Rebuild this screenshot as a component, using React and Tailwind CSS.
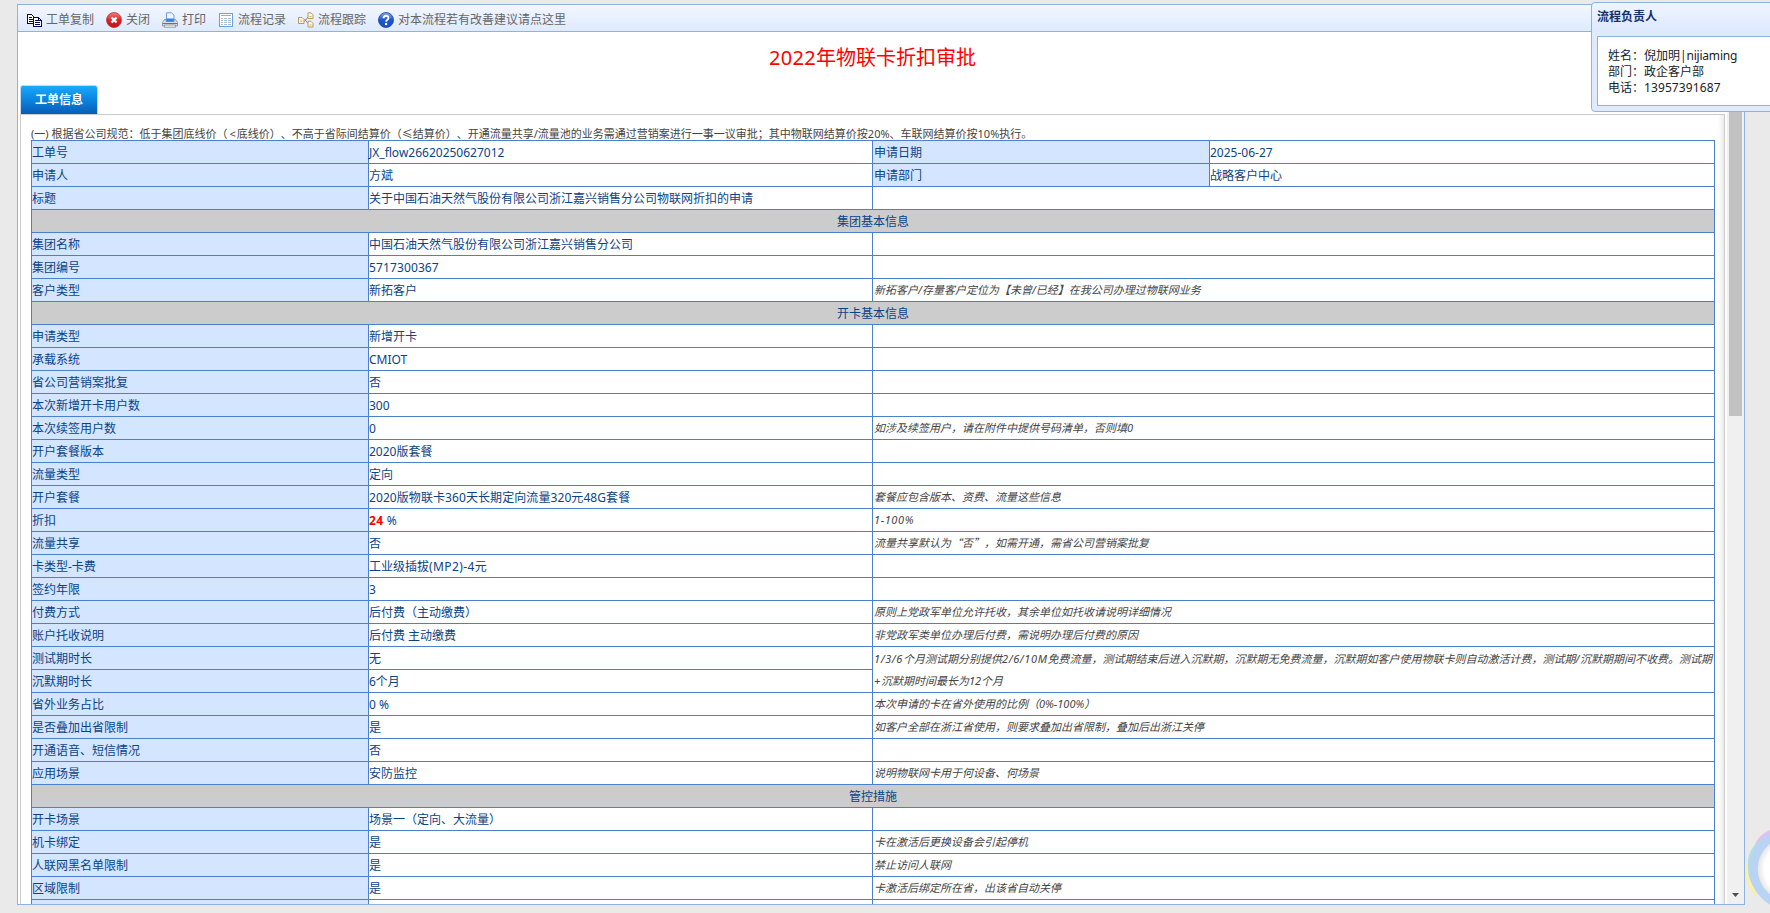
const FONT = "font-['Noto_Sans','Noto_Sans_CJK_SC',sans-serif] [text-spacing-trim:space-all]";

const CopyIcon = () => (
  <svg className="block shrink-0" width="16" height="16" viewBox="0 0 16 16" shapeRendering="crispEdges">
    <path d="M1.500 2.500h4l2 2v7h-6z" fill="#fff" stroke="#111" />
    <path d="M3 5.500h3M3 7.500h4M3 9.500h4" stroke="#111" />
    <path d="M7.500 5.500h5l3 3v6h-8z" fill="#fff" stroke="#07075e" />
    <path d="M12.500 5v4M12 8.500h4" stroke="#07075e" />
    <path d="M9 8.500h3M9 10.500h5M9 12.500h5" stroke="#07075e" />
  </svg>
);

const CloseIcon = () => (
  <svg className="block shrink-0" width="16" height="16" viewBox="0 0 16 16">
    <defs>
      <linearGradient id="red" x1="0" y1="0" x2="0" y2="1">
        <stop offset="0" stopColor="#ef8078" />
        <stop offset=".5" stopColor="#d8262a" />
        <stop offset="1" stopColor="#c80d16" />
      </linearGradient>
    </defs>
    <circle cx="8" cy="8" r="7.500" fill="url(#red)" stroke="#b3282c" strokeWidth=".7" />
    <path d="M5.500 5.500l5 5M10.500 5.500l-5 5" stroke="#fff" strokeWidth="2.400" />
  </svg>
);

const PrintIcon = () => (
  <svg className="block shrink-0" width="16" height="16" viewBox="0 0 16 16">
    <path d="M4.500 8V.8h5l2.500 2.400V8" fill="#eef5ff" stroke="#6f9be0" />
    <path d="M2.500 7.500h1.500v2h8v-2h1.500l2 3v3.500H.5v-3.500z" fill="#d9dce2" stroke="#8a8f99" strokeWidth=".9" />
    <path d="M4.200 6.500h7.600v3H4.200z" fill="#2f86e8" />
    <path d="M.8 11.500h14.400" stroke="#6d737e" />
    <path d="M2.500 13h11v2.300h-11z" fill="#eceef2" stroke="#8a8f99" strokeWidth=".8" />
  </svg>
);

const ListIcon = () => (
  <svg className="block shrink-0" width="16" height="16" viewBox="0 0 16 16" shapeRendering="crispEdges">
    <path d="M1.500 1.500h13v13h-13z" fill="#fff" stroke="#6f9fd8" />
    <path d="M3 3.500h10" stroke="#8cc08a" />
    <path d="M3 6.500h10M3 8.500h10M3 10.500h10M3 12.500h10" stroke="#a9bcd6" />
    <path d="M5.500 5v9M9.500 5v9" stroke="#fff" />
  </svg>
);

const TraceIcon = () => (
  <svg className="block shrink-0" width="16" height="16" viewBox="0 0 16 16">
    <path d="M6.500 9.500l3.500-4.500M6.500 7l3.500 4.500" stroke="#77736b" strokeWidth=".8" />
    <path d="M.5 5.500h3.500l2 2v4H.5zM10 .8h3l2 2v3.700h-5zM10 9.300h3l2 2V15h-5z" fill="#fdf8ea" stroke="#b59a5c" />
    <path d="M2 9h2.500M11.500 4.500h2M11.500 13h2" stroke="#b59a5c" strokeWidth=".8" />
  </svg>
);

const HelpIcon = () => (
  <svg className="block shrink-0" width="16" height="16" viewBox="0 0 16 16">
    <defs>
      <linearGradient id="blue" x1="0" y1="0" x2="0" y2="1">
        <stop offset="0" stopColor="#7ea6ee" />
        <stop offset=".5" stopColor="#1f55cf" />
        <stop offset="1" stopColor="#1450d0" />
      </linearGradient>
    </defs>
    <circle cx="8" cy="8" r="7.500" fill="url(#blue)" stroke="#1a4396" strokeWidth=".8" />
    <path d="M5.600 6.200c0-3.400 5-3.200 4.900-.3 0 1.800-2.300 1.700-2.400 3.700" fill="none" stroke="#fff" strokeWidth="1.900" />
    <circle cx="8.100" cy="12" r="1.200" fill="#fff" />
  </svg>
);

const ACTIONS = [
  [CopyIcon, "工单复制", "w-[80px]"],
  [CloseIcon, "关闭", "w-[56px]"],
  [PrintIcon, "打印", "w-[56px]"],
  [ListIcon, "流程记录", "w-[80px]"],
  [TraceIcon, "流程跟踪", "w-[80px]"],
  [HelpIcon, "对本流程若有改善建议请点这里", "w-[200px]"],
];

const Wide = ({ children }) => <span className="tracking-[0.6px]">{children}</span>;
const Quote = ({ children }) => <span className="font-['Noto_Sans_CJK_SC'] leading-[0]">{children}</span>;

const ROWS = [
  { label: "工单号", value: "JX_flow26620250627012", label2: "申请日期", value2: "2025-06-27" },
  { label: "申请人", value: "方斌", label2: "申请部门", value2: "战略客户中心" },
  { label: "标题", value: "关于中国石油天然气股份有限公司浙江嘉兴销售分公司物联网折扣的申请" },
  { section: "集团基本信息" },
  { label: "集团名称", value: "中国石油天然气股份有限公司浙江嘉兴销售分公司" },
  { label: "集团编号", value: <span className="tracking-[0.12px]">5717300367</span> },
  { label: "客户类型", value: "新拓客户", note: "新拓客户/存量客户定位为【未曾/已经】在我公司办理过物联网业务" },
  { section: "开卡基本信息" },
  { label: "申请类型", value: "新增开卡" },
  { label: "承载系统", value: "CMIOT" },
  { label: "省公司营销案批复", value: "否" },
  { label: "本次新增开卡用户数", value: "300" },
  { label: "本次续签用户数", value: "0", note: "如涉及续签用户，请在附件中提供号码清单，否则填0" },
  { label: "开户套餐版本", value: "2020版套餐" },
  { label: "流量类型", value: "定向" },
  {
    label: "开户套餐",
    value: <span className="tracking-[0.08px]">2020版物联卡360天长期定向流量320元48G套餐</span>,
    note: "套餐应包含版本、资费、流量这些信息",
  },
  {
    label: "折扣",
    value: (
      <>
        <b className="tracking-[0.4px] text-[#ff0000]">24</b> <Wide>%</Wide>
      </>
    ),
    note: <Wide>1-100%</Wide>,
  },
  {
    label: "流量共享",
    value: "否",
    note: (
      <>
        流量共享默认为<Quote>“</Quote>否<Quote>”，</Quote>如需开通，需省公司营销案批复
      </>
    ),
  },
  {
    label: "卡类型-卡费",
    value: (
      <>
        工业级插拔<span className="tracking-[0.4px]">(MP2)-4</span>元
      </>
    ),
  },
  { label: "签约年限", value: "3" },
  { label: "付费方式", value: "后付费（主动缴费）", note: "原则上党政军单位允许托收，其余单位如托收请说明详细情况" },
  { label: "账户托收说明", value: "后付费 主动缴费", note: "非党政军类单位办理后付费，需说明办理后付费的原因" },
  {
    label: "测试期时长",
    value: "无",
    span: 2,
    note: (
      <>
        <Wide>1/3/6</Wide>个月测试期分别提供<Wide>2/6/10M</Wide>
        免费流量，测试期结束后进入沉默期，沉默期无免费流量，沉默期如客户使用物联卡则自动激活计费，测试期<Wide>/</Wide>
        沉默期期间不收费。测试期
      </>
    ),
    note2: (
      <>
        <Wide>+</Wide>沉默期时间最长为12个月
      </>
    ),
  },
  { label: "沉默期时长", value: "6个月", covered: true },
  { label: "省外业务占比", value: "0 %", note: "本次申请的卡在省外使用的比例（0%-100%）" },
  { label: "是否叠加出省限制", value: "是", note: "如客户全部在浙江省使用，则要求叠加出省限制，叠加后出浙江关停" },
  { label: "开通语音、短信情况", value: "否" },
  { label: "应用场景", value: "安防监控", note: "说明物联网卡用于何设备、何场景" },
  { section: "管控措施" },
  { label: "开卡场景", value: "场景一（定向、大流量）" },
  { label: "机卡绑定", value: "是", note: "卡在激活后更换设备会引起停机" },
  { label: "人联网黑名单限制", value: "是", note: "禁止访问人联网" },
  { label: "区域限制", value: "是", note: "卡激活后绑定所在省，出该省自动关停" },
  { label: "", value: "" },
];

const BOX = "h-[23px] border border-[#4a80cc] p-0 whitespace-nowrap";
const CELL = BOX + " pt-[2px] leading-[20px]";
const LABEL = CELL + " bg-[#d4e5ff]";

function Row({ row }) {
  if (row.section) {
    return (
      <tr>
        <td colSpan={4} className={CELL + " bg-[#cccccc] text-center"}>{row.section}</td>
      </tr>
    );
  }
  return (
    <tr>
      <td className={LABEL}>{row.label}</td>
      <td className={CELL}>{row.value}</td>
      {row.label2 && (
        <>
          <td className={LABEL + " pl-px"}>{row.label2}</td>
          <td className={CELL}>{row.value2}</td>
        </>
      )}
      {!row.label2 && !row.covered && (
        <td
          colSpan={2}
          rowSpan={row.span || 1}
          className={BOX + " pl-px text-[11px] leading-[22px] text-[#444444] italic"}
        >
          <div className="h-[22px]">{row.note}</div>
          {row.note2 && <div className="h-[22px]">{row.note2}</div>}
        </td>
      )}
    </tr>
  );
}

export default function App() {
  return (
    <div className={"relative h-[913px] w-[1770px] overflow-hidden bg-[#eaeaea] pt-1 pl-[17px] text-[12px] " + FONT}>
      <div className="flex h-[901px] w-[1728px] flex-col border border-[#8db2e3] bg-white">
        <div className="flex h-[27px] shrink-0 items-center border-b border-[#8db2e3] bg-linear-to-b from-[#f2f6ff] to-[#dfeaff] pt-[4px] pl-[8px] text-[#666666]">
          {ACTIONS.map(([Icon, text, width]) => (
            <div key={text} className={"flex shrink-0 items-center gap-1 whitespace-nowrap " + width}>
              <Icon />
              <span>{text}</span>
            </div>
          ))}
        </div>

        <div className="flex min-h-0 flex-1">
          <div className="flex w-[1709px] shrink-0 flex-col overflow-hidden pl-[2px]">
            <h1 className="h-[53px] shrink-0 pt-[11px] pr-[2px] text-center text-[20px] leading-[30px] text-[#ff0000]">
              <span className="tracking-[0.35px]">2022</span>年物联卡折扣审批
            </h1>
            <div className="h-[29px] w-[78px] shrink-0 rounded-t-[3px] border border-b-0 border-[#c4d8ea] bg-linear-to-b from-[#1ba9fb] from-0% via-[#0a84de] via-50% to-[#0a5cb4] to-100% text-center leading-[27px] font-bold text-white">
              工单信息
            </div>
            <div className="min-h-0 w-[1705px] flex-1 overflow-hidden border border-b-0 border-[#cccccc] bg-linear-to-l from-[#ebebeb] to-white to-[6px] pt-[11px] pl-[10px]">
              <p className="h-[14px] text-[11px] leading-[16px] whitespace-nowrap text-[#444444]">
                (一) 根据省公司规范：低于集团底线价（<span className="pr-px pl-[2px]">&lt;</span>
                底线价）、不高于省际间结算价（≤结算价）、开通流量共享/流量池的业务需通过营销案进行一事一议审批；其中物联网结算价按20%、车联网结算价按10%执行。
              </p>
              <table className="w-[1684px] table-fixed border-collapse bg-white text-[#0b4387]">
                <colgroup>
                  <col className="w-[337px]" />
                  <col className="w-[504px]" />
                  <col className="w-[337px]" />
                  <col className="w-[505px]" />
                </colgroup>
                <tbody>
                  {ROWS.map((row, i) => (
                    <Row key={i} row={row} />
                  ))}
                </tbody>
              </table>
            </div>
          </div>
          <div className="flex w-[17px] shrink-0 flex-col items-center justify-between bg-[#f0f0f0] pt-[17px] pb-[7px]">
            <div className="h-[367px] w-[13px] bg-[#c1c1c1]" />
            <svg width="7" height="4" viewBox="0 0 7 4">
              <path d="M0 0h7L3.500 4z" fill="#505050" />
            </svg>
          </div>
        </div>
      </div>

      <aside className="absolute top-[2px] left-[1591px] h-[110px] w-[190px] rounded-[4px] border border-[#8db2e3] bg-linear-to-b from-[#eff5ff] to-[#dfeaff] to-[26px] pl-[5px]">
        <h2 className="h-[33px] pt-[2px] leading-[24px] font-bold text-[#15306b]">流程负责人</h2>
        <div className="h-[70px] w-[200px] border border-[#8db2e3] bg-white pt-[11px] pl-[10px] leading-[16px] text-[#222222]">
          <p>
            姓名：倪加明<span className="tracking-[-0.2px]">|nijiaming</span>
          </p>
          <p>部门：政企客户部</p>
          <p>
            电话：<span className="tracking-[0.1px]">13957391687</span>
          </p>
        </div>
      </aside>

      <svg className="absolute top-[826px] left-[1740px]" width="30" height="87" viewBox="0 0 30 87">
        <defs>
          <radialGradient id="disc" gradientUnits="userSpaceOnUse" cx="51" cy="43" r="33">
            <stop offset=".8" stopColor="#ffffff" />
            <stop offset="1" stopColor="#e6e6e6" />
          </radialGradient>
        </defs>
        <path d="M30 4C20 8 12 18 14 28L30 14z" fill="#dcc3ef" />
        <path d="M8 34C3 42 4 56 14 69L22 66z" fill="#f8efb0" />
        <path d="M24 12C11 20 7 28 8 43C8 55 16 66 26 73z" fill="#b4dde4" />
        <circle cx="50" cy="43" r="34" fill="url(#disc)" />
        <circle cx="50" cy="43" r="36.500" fill="none" stroke="#b9d3f2" strokeWidth="8.500" />
      </svg>
    </div>
  );
}
